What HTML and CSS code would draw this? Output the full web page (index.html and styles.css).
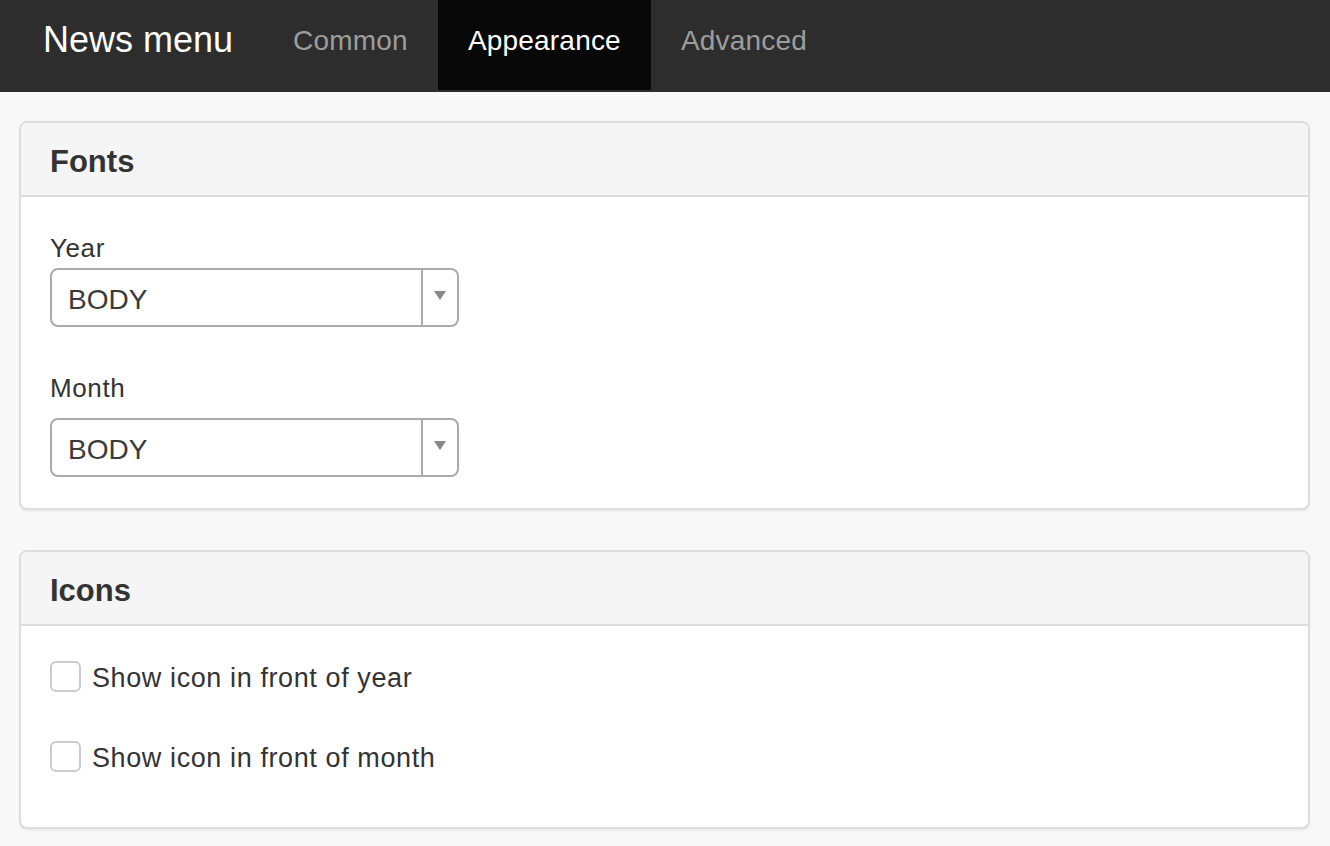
FILE: index.html
```html
<!DOCTYPE html>
<html lang="en">
<head>
<meta charset="utf-8">
<title>News menu – Appearance</title>
<link rel="stylesheet" href="styles.css">
</head>
<body>
  <nav class="navbar">
    <div class="brand">News menu</div>
    <ul class="tabs">
      <li class="tab">Common</li>
      <li class="tab active">Appearance</li>
      <li class="tab">Advanced</li>
    </ul>
  </nav>

  <main class="content">
    <section class="panel">
      <header class="panel-heading"><h3>Fonts</h3></header>
      <div class="panel-body fonts-body">
        <div class="field">
          <label class="field-label">Year</label>
          <div class="select">
            <span class="select-value">BODY</span>
            <span class="select-arrow"></span>
          </div>
        </div>
        <div class="field field-month">
          <label class="field-label">Month</label>
          <div class="select">
            <span class="select-value">BODY</span>
            <span class="select-arrow"></span>
          </div>
        </div>
      </div>
    </section>

    <section class="panel">
      <header class="panel-heading"><h3>Icons</h3></header>
      <div class="panel-body icons-body">
        <label class="check-row"><span class="checkbox"></span><span class="check-text">Show icon in front of year</span></label>
        <label class="check-row"><span class="checkbox"></span><span class="check-text">Show icon in front of month</span></label>
      </div>
    </section>
  </main>
</body>
</html>
```

FILE: styles.css
```css
* {
  box-sizing: border-box;
}

html, body {
  margin: 0;
  padding: 0;
}

body {
  background: #f8f8f8;
  color: #333;
  font-family: "Liberation Sans", Arial, Helvetica, sans-serif;
  width: 1330px;
  min-height: 846px;
}

/* ---- top navigation bar ---- */
.navbar {
  display: flex;
  align-items: flex-start;
  height: 92px;
  background: #2d2d2d;
  padding-left: 13px;
}

.brand {
  color: #fff;
  font-size: 36px;
  line-height: 40px;
  padding: 20px 30px 30px 30px;
  white-space: nowrap;
}

.tabs {
  display: flex;
  list-style: none;
  margin: 0;
  padding: 0;
}

.tab {
  color: #9d9d9d;
  font-size: 28px;
  line-height: 32px;
  letter-spacing: 0.2px;
  height: 90px;
  padding: 25px 30px 33px 30px;
  white-space: nowrap;
}

.tab.active {
  color: #fff;
  background: #080808;
}

/* ---- panels ---- */
.content {
  padding: 29px 20px 16px 19px;
}

.panel {
  background: #fff;
  border: 2px solid #dddddd;
  border-radius: 8px;
  box-shadow: 0 2px 2px rgba(0, 0, 0, 0.05);
  margin-bottom: 40px;
}

.panel-heading {
  background: #f5f5f5;
  border-bottom: 2px solid #dddddd;
  border-radius: 6px 6px 0 0;
  padding: 21px 29px 15px 29px;
}

.panel-heading h3 {
  margin: 0;
  font-size: 31px;
  line-height: 36px;
  font-weight: bold;
  color: #333;
}

.panel-body {
  padding-left: 29px;
  padding-right: 29px;
}

/* ---- font selects ---- */
.fonts-body {
  padding-top: 33px;
  padding-bottom: 31px;
}

.field + .field {
  margin-top: 43px;
}

.field-label {
  display: block;
  font-size: 26px;
  line-height: 37px;
  letter-spacing: 0.6px;
  margin-bottom: 1px;
}

.field-month .field-label {
  margin-bottom: 11px;
}

.select {
  display: flex;
  width: 409px;
  height: 59px;
  border: 2px solid #ababab;
  border-radius: 8px;
  background: #fff;
}

.select-value {
  flex: 1;
  font-size: 28px;
  line-height: 55px;
  padding-left: 16px;
  padding-top: 2px;
  color: #3a3a3a;
}

.select-arrow {
  width: 36px;
  border-left: 2px solid #ababab;
  display: flex;
  align-items: center;
  justify-content: center;
}

.select-arrow::after {
  content: "";
  width: 0;
  height: 0;
  border-left: 6px solid transparent;
  border-right: 6px solid transparent;
  border-top: 9px solid #888;
  margin-bottom: 5px;
}

/* ---- icon checkboxes ---- */
.icons-body {
  padding-top: 35px;
  padding-bottom: 55px;
}

.check-row {
  display: flex;
  align-items: center;
  height: 31px;
}

.check-row + .check-row {
  margin-top: 49px;
}

.checkbox {
  width: 31px;
  height: 31px;
  border: 2px solid #cccccc;
  border-radius: 6px;
  background: #fff;
  flex-shrink: 0;
}

.check-text {
  margin-left: 11px;
  padding-top: 4px;
  font-size: 27px;
  letter-spacing: 0.6px;
  line-height: 31px;
}
```
